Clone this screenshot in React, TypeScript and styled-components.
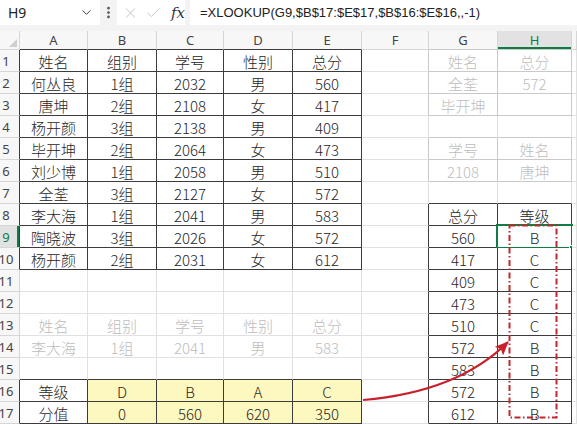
import React from "react";
import styled, { createGlobalStyle } from "styled-components";
import { ChevronDown, EllipsisVertical, X, Check } from "lucide-react";

const GlobalStyle = createGlobalStyle`
  html, body { margin: 0; padding: 0; background: #fff; overflow: hidden; }
  body { font-family: "Noto Sans CJK SC", "Noto Sans", sans-serif; }
`;

const DARK = "#3c3c3c";
const LIGHT = "#c9c9c9";
const GRID = "#e1e1e1";
const HEAD_LINE = "#d6d6d6";
const GREEN = "#107c41";

const COLS = ["A", "B", "C", "D", "E", "F", "G", "H", ""];

const rows: string[][] = [
  ["姓名", "组别", "学号", "性别", "总分", "", "姓名", "总分"],
  ["何丛良", "1组", "2032", "男", "560", "", "全荃", "572"],
  ["唐坤", "2组", "2108", "女", "417", "", "毕开坤", ""],
  ["杨开颜", "3组", "2138", "男", "409", "", "", ""],
  ["毕开坤", "2组", "2064", "女", "473", "", "学号", "姓名"],
  ["刘少博", "1组", "2058", "男", "510", "", "2108", "唐坤"],
  ["全荃", "3组", "2127", "女", "572", "", "", ""],
  ["李大海", "1组", "2041", "男", "583", "", "总分", "等级"],
  ["陶晓波", "3组", "2026", "女", "572", "", "560", "B"],
  ["杨开颜", "2组", "2031", "女", "612", "", "417", "C"],
  ["", "", "", "", "", "", "409", "C"],
  ["", "", "", "", "", "", "473", "C"],
  ["姓名", "组别", "学号", "性别", "总分", "", "510", "C"],
  ["李大海", "1组", "2041", "男", "583", "", "572", "B"],
  ["", "", "", "", "", "", "583", "B"],
  ["等级", "D", "B", "A", "C", "", "572", "B"],
  ["分值", "0", "560", "620", "350", "", "612", "B"],
];

type Range = { r1: number; r2: number; c1: number; c2: number };

const darkRanges: Range[] = [
  { r1: 1, r2: 10, c1: 1, c2: 5 },
  { r1: 16, r2: 17, c1: 1, c2: 5 },
  { r1: 8, r2: 17, c1: 7, c2: 8 },
];
const lightRanges: Range[] = [
  { r1: 1, r2: 3, c1: 7, c2: 8 },
  { r1: 5, r2: 6, c1: 7, c2: 8 },
];
const fadedRanges: Range[] = [...lightRanges, { r1: 13, r2: 14, c1: 1, c2: 5 }];
const fillRange: Range = { r1: 16, r2: 17, c1: 2, c2: 5 };

const SEL = { r: 9, c: 8 };

const inAny = (list: Range[], r: number, c: number) =>
  list.some((g) => r >= g.r1 && r <= g.r2 && c >= g.c1 && c <= g.c2);

// colour of the line between cell (r,c) and its neighbour (r2,c2)
const edge = (r: number, c: number, r2: number, c2: number, fallback: string) => {
  if (inAny(darkRanges, r, c) || inAny(darkRanges, r2, c2)) return DARK;
  if (inAny(lightRanges, r, c) || inAny(lightRanges, r2, c2)) return LIGHT;
  return fallback;
};

const Page = styled.div`
  position: relative;
  width: 577px;
  height: 424px;
  overflow: hidden;
  background: #fff;
`;

const TopBar = styled.div`
  display: flex;
  align-items: stretch;
  height: 31px;
  padding-bottom: 6px;
  box-sizing: border-box;
  background: #f3f3f3;
`;

const NameBox = styled.div`
  display: flex;
  align-items: center;
  justify-content: space-between;
  width: 100px;
  padding: 0 6px 0 8px;
  box-sizing: border-box;
  background: #fff;
  font-family: "Noto Sans", sans-serif;
  font-size: 14px;
  color: #222;
`;

const Grip = styled.div`
  display: flex;
  align-items: center;
  justify-content: center;
  width: 17px;
  color: #555;
`;

const ActionBox = styled.div`
  display: flex;
  align-items: center;
  gap: 6px;
  width: 68px;
  padding-left: 5px;
  box-sizing: border-box;
  background: #fff;
  color: #c4c4c4;
`;

const Fx = styled.span`
  margin-left: 3px;
  font-family: "DejaVu Serif", "Liberation Serif", serif;
  font-style: italic;
  font-size: 15px;
  color: #333;
`;

const FormulaBox = styled.div`
  flex: 1;
  display: flex;
  align-items: center;
  margin-left: 5px;
  padding-left: 10px;
  background: #fff;
  font-family: "Liberation Sans", sans-serif;
  font-size: 13px;
  letter-spacing: 0;
  color: #222;
  white-space: nowrap;
`;

const Sheet = styled.div`
  display: grid;
  grid-template-columns: 20px 68px 69px 67px 69px 69px 67px 69px 74px 1fr;
  grid-template-rows: 19px repeat(17, 22px);
`;

const Corner = styled.div`
  position: relative;
  background: #f7f7f7;
  border-right: 1px solid ${HEAD_LINE};
  border-bottom: 1px solid ${HEAD_LINE};
  box-sizing: border-box;
  &::after {
    content: "";
    position: absolute;
    right: 2px;
    bottom: 2px;
    border-left: 8px solid transparent;
    border-bottom: 8px solid #cfcfcf;
  }
`;

const ColHead = styled.div<{ $active?: boolean; $bottom: string }>`
  display: flex;
  align-items: center;
  justify-content: center;
  background: ${(p) => (p.$active ? "#e2e2e2" : "#f7f7f7")};
  color: ${(p) => (p.$active ? GREEN : "#444")};
  border-right: 1px solid ${HEAD_LINE};
  border-bottom: 1px solid ${(p) => p.$bottom};
  box-shadow: ${(p) => (p.$active ? `inset 0 -2px 0 ${GREEN}` : "none")};
  box-sizing: border-box;
  font-family: "Noto Sans", sans-serif;
  font-size: 13px;
`;

const RowHead = styled.div<{ $active?: boolean; $right: string }>`
  display: flex;
  align-items: center;
  justify-content: center;
  padding-right: 7px;
  background: ${(p) => (p.$active ? "#e2e2e2" : "#f7f7f7")};
  color: ${(p) => (p.$active ? GREEN : "#444")};
  border-right: 1px solid ${(p) => p.$right};
  border-bottom: 1px solid ${HEAD_LINE};
  box-shadow: ${(p) => (p.$active ? `inset -2px 0 0 ${GREEN}` : "none")};
  box-sizing: border-box;
  font-family: "Noto Sans", sans-serif;
  font-size: 13px;
  white-space: nowrap;
`;

const Cell = styled.div<{ $right: string; $bottom: string; $faded?: boolean; $fill?: boolean }>`
  position: relative;
  display: flex;
  align-items: center;
  justify-content: center;
  padding-top: 1px;
  background: ${(p) => (p.$fill ? "#fdf8c0" : "#fff")};
  border-right: 1px solid ${(p) => p.$right};
  border-bottom: 1px solid ${(p) => p.$bottom};
  box-sizing: border-box;
  font-size: 15px;
  font-weight: 300;
  color: ${(p) => (p.$faded ? "#bdbdbd" : "#262626")};
  white-space: nowrap;
`;

const Selection = styled.span`
  position: absolute;
  left: -2px;
  top: -2px;
  right: -2px;
  bottom: -2px;
  border: 2px solid ${GREEN};
  pointer-events: none;
  &::after {
    content: "";
    position: absolute;
    right: -5px;
    bottom: -5px;
    width: 5px;
    height: 5px;
    background: ${GREEN};
    border: 1px solid #fff;
  }
`;

const Overlay = styled.svg`
  position: absolute;
  left: 0;
  top: 0;
  pointer-events: none;
`;

export default function App() {
  const cells: React.ReactNode[] = [];

  cells.push(<Corner key="corner" />);
  COLS.forEach((name, i) => {
    const c = i + 1;
    cells.push(
      <ColHead key={`h${c}`} $active={c === SEL.c} $bottom={edge(0, c, 1, c, HEAD_LINE)}>
        {name}
      </ColHead>
    );
  });

  rows.forEach((row, ri) => {
    const r = ri + 1;
    cells.push(
      <RowHead key={`r${r}`} $active={r === SEL.r} $right={edge(r, 0, r, 1, HEAD_LINE)}>
        {r}
      </RowHead>
    );
    for (let c = 1; c <= 9; c++) {
      const text = row[c - 1] ?? "";
      cells.push(
        <Cell
          key={`${r}-${c}`}
          $right={edge(r, c, r, c + 1, GRID)}
          $bottom={edge(r, c, r + 1, c, GRID)}
          $faded={inAny(fadedRanges, r, c)}
          $fill={inAny([fillRange], r, c)}
        >
          {text}
          {r === SEL.r && c === SEL.c && <Selection />}
        </Cell>
      );
    }
  });

  return (
    <Page>
      <GlobalStyle />
      <TopBar>
        <NameBox>
          H9
          <ChevronDown size={15} strokeWidth={1.6} color="#444" />
        </NameBox>
        <Grip>
          <EllipsisVertical size={15} strokeWidth={2.4} />
        </Grip>
        <ActionBox>
          <X size={18} strokeWidth={1.4} />
          <Check size={18} strokeWidth={1.4} />
          <Fx>fx</Fx>
        </ActionBox>
        <FormulaBox>=XLOOKUP(G9,$B$17:$E$17,$B$16:$E$16,,-1)</FormulaBox>
      </TopBar>
      <Sheet>{cells}</Sheet>
      <Overlay width={577} height={424} viewBox="0 0 577 424">
        <defs>
          <marker
            id="head"
            markerUnits="userSpaceOnUse"
            markerWidth={14}
            markerHeight={12}
            refX={13}
            refY={6}
            orient="auto"
          >
            <path d="M0,0 L14,6 L0,12 L3,6 z" fill="#c8202a" />
          </marker>
        </defs>
        <rect
          x={509.5}
          y={225.5}
          width={47}
          height={192}
          fill="none"
          stroke="#c0282d"
          strokeWidth={2}
          strokeDasharray="6 2.5 1.5 2.5"
        />
        <path
          d="M 363 400 Q 458 392 508 342"
          fill="none"
          stroke="#c8202a"
          strokeWidth={2.2}
          markerEnd="url(#head)"
        />
      </Overlay>
    </Page>
  );
}
